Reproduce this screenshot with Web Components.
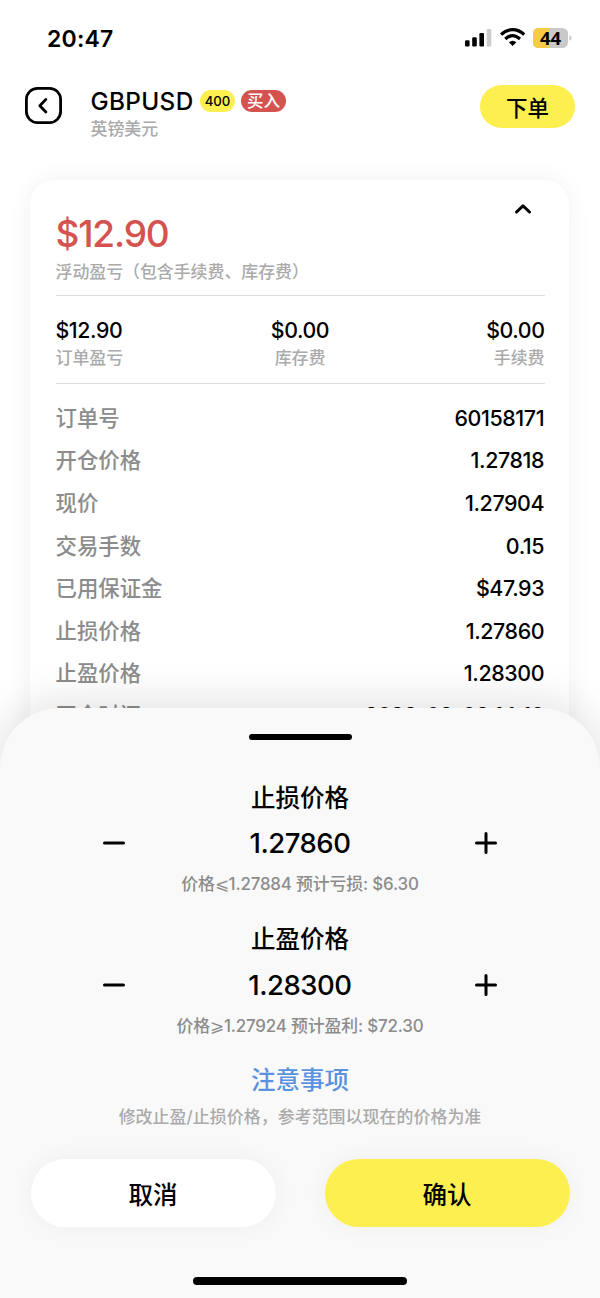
<!DOCTYPE html>
<html lang="zh-CN">
<head>
<meta charset="utf-8">
<title>GBPUSD</title>
<style>
html,body{margin:0;padding:0;background:#fff}
body{font-family:Inter,"Noto Sans CJK SC",sans-serif;font-weight:500;color:#000;width:600px;height:1298px;overflow:hidden}
</style>
</head>
<body>
<trade-app></trade-app>
<script>
function define(name, html) {
  const tpl = document.createElement('template');
  tpl.innerHTML = html;
  customElements.define(name, class extends HTMLElement {
    constructor() {
      super();
      this.attachShadow({mode: 'open'}).appendChild(tpl.content.cloneNode(true));
    }
  });
}

define('status-bar', `
<style>
:host{display:flex;box-sizing:border-box;height:76px;padding:0 29px 0 47px;align-items:center;justify-content:space-between}
.time{font-size:23px;font-weight:600;line-height:28px;letter-spacing:.2px;padding-top:1px}
svg{display:block;width:107px;height:32px;overflow:visible}
text{font:700 18.500px "Open Sans",Inter,sans-serif}
</style>
<span class="time"><slot></slot></span>
<svg viewBox="0 -5 107 32">
  <rect x="1" y="13.3" width="4.6" height="6.2" rx="1.3"/>
  <rect x="8.2" y="10.3" width="4.6" height="9.2" rx="1.3"/>
  <rect x="15.4" y="6" width="4.6" height="13.5" rx="1.3"/>
  <rect x="22.7" y="2" width="4.6" height="17.5" rx="1.3" fill="#ccc"/>
  <g fill="none" stroke="#000" stroke-width="3.2">
    <path d="M37.1 7.600C44 .9 53.2 .9 60.2 7.600"/>
    <path d="M41.3 12Q48.6 5.3 56 12"/>
  </g>
  <path d="M44.9 15.2Q48.6 12.1 52.4 15.2L48.6 19Z"/>
  <rect x="69" y="1" width="35" height="20" rx="5.500" fill="#c9c9c9"/>
  <path d="M85 1H74.500A5.500 5.500 0 0 0 69 6.500V15.500A5.500 5.500 0 0 0 74.500 21H85Z" fill="#f8cb45"/>
  <path d="M105.300 8.200Q107.600 9 107.600 11T105.300 13.800Z" fill="#c9c9c9"/>
  <text x="86.500" y="17.500" text-anchor="middle">44</text>
</svg>`);

define('tag-pill', `
<style>
:host{display:flex;box-sizing:border-box;height:22px;border-radius:11px;align-items:center;justify-content:center;line-height:22px}
</style><slot></slot>`);

define('pill-button', `
<style>
:host{display:flex;align-items:center;justify-content:center;border-radius:99px;background:#fcef4f;white-space:nowrap}
</style><slot></slot>`);

define('nav-header', `
<style>
:host{display:flex;box-sizing:border-box;height:104px;padding:9px 25px 0 25px;align-items:flex-start}
.back{width:37px;height:37px;margin:2px 0 0 -.5px;flex:none}
.names{margin:3px 0 0 29px;flex:1}
.line{display:flex;align-items:center;height:26px}
.sym{font-size:24.300px;line-height:26px;width:102px;letter-spacing:.35px;white-space:nowrap}
.lev{width:35px;margin-left:7.500px;background:#fcef4f;font-size:13.200px}
.side{width:45px;margin-left:6px;background:#d4534e;color:#fff;font-size:16.500px}
.cn{font-size:16.900px;line-height:24px;color:#aaa;margin-top:3px}
pill-button{width:95px;height:43px;font-size:21.500px}
</style>
<svg class="back" viewBox="0 0 37 37" fill="none" stroke="#000" stroke-width="2.800" stroke-linecap="round" stroke-linejoin="round">
  <rect x="1.400" y="1.400" width="34.200" height="34.200" rx="11"/>
  <path d="M20.900 12.400L14.800 18.700L20.900 25"/>
</svg>
<div class="names">
  <div class="line"><span class="sym">GBPUSD</span><tag-pill class="lev">400</tag-pill><tag-pill class="side">买入</tag-pill></div>
  <div class="cn">英镑美元</div>
</div>
<pill-button>下单</pill-button>`);

define('stat-item', `
<style>
:host{display:block;text-align:var(--align,left)}
.v{font-size:21.300px;line-height:28px;letter-spacing:-.4px}
.l{font-size:16.900px;line-height:24px;color:#aaa;margin-top:2px}
</style>
<div class="v"><slot name="value"></slot></div><div class="l"><slot></slot></div>`);

define('detail-row', `
<style>
:host{display:flex;height:42.600px;align-items:center;justify-content:space-between;font-size:21.400px;line-height:30px}
.l{color:#8c8c8c}
.v{letter-spacing:-.38px;margin-right:.3px}
:host(.last){height:40.800px}
</style>
<span class="l"><slot></slot></span><span class="v"><slot name="value"></slot></span>`);

define('order-card', `
<style>
:host{display:block;box-sizing:border-box;margin:0 31px 0 30px;height:640px;padding:34px 24.500px 0 25.500px;border-radius:25px;background:#fff;box-shadow:0 0 26px rgba(0,0,0,.06)}
.top{display:flex;justify-content:space-between;height:81px;border-bottom:1px solid #dedede}
.big{font-size:37px;line-height:40px;color:#d4534e;letter-spacing:-1.200px}
.note{font-size:16.900px;line-height:24px;margin-top:6px;color:#aaa}
svg{width:18px;height:12px;margin:-11px 13px 0 0}
.stats{display:grid;grid-template-columns:1fr 1fr 1fr;height:67px;padding-top:20px;border-bottom:1px solid #dedede}
.c{--align:center}.r{--align:right}
.rows{padding-top:12.600px}
</style>
<div class="top">
  <div><div class="big">$12.90</div><div class="note">浮动盈亏（包含手续费、库存费）</div></div>
  <svg viewBox="0 0 18 12" fill="none" stroke="#000" stroke-width="3" stroke-linecap="round" stroke-linejoin="round"><path d="M2.500 9L9 2.800L15.500 9"/></svg>
</div>
<div class="stats">
  <stat-item><span slot="value">$12.90</span>订单盈亏</stat-item>
  <stat-item class="c"><span slot="value">$0.00</span>库存费</stat-item>
  <stat-item class="r"><span slot="value">$0.00</span>手续费</stat-item>
</div>
<div class="rows">
  <detail-row>订单号<span slot="value">60158171</span></detail-row>
  <detail-row>开仓价格<span slot="value">1.27818</span></detail-row>
  <detail-row>现价<span slot="value">1.27904</span></detail-row>
  <detail-row>交易手数<span slot="value">0.15</span></detail-row>
  <detail-row>已用保证金<span slot="value">$47.93</span></detail-row>
  <detail-row>止损价格<span slot="value">1.27860</span></detail-row>
  <detail-row>止盈价格<span slot="value">1.28300</span></detail-row>
  <detail-row class="last">开仓时间<span slot="value">2023-08-03 14:10</span></detail-row>
</div>`);

define('price-stepper', `
<style>
:host{display:block;height:141.300px;text-align:center}
.t{font-size:24.500px;line-height:34px}
.mid{display:flex;align-items:center;justify-content:space-between;padding:0 103px;height:36px;margin-top:10.300px}
.v{font-size:27.500px;line-height:36px;letter-spacing:-.5px}
svg{width:22px;height:22px;display:block}
.h{font-size:16.900px;line-height:24px;margin-top:11px;color:#8c8c8c;white-space:pre;letter-spacing:-.16px}
</style>
<div class="t"><slot></slot></div>
<div class="mid">
  <svg viewBox="0 0 22 22" stroke="#000" stroke-width="3" stroke-linecap="round"><path d="M1.500 11H20.500"/></svg>
  <span class="v"><slot name="value"></slot></span>
  <svg viewBox="0 0 22 22" stroke="#000" stroke-width="3" stroke-linecap="round"><path d="M1.500 11H20.500M11 1.500V20.500"/></svg>
</div>
<div class="h"><slot name="hint"></slot></div>`);

define('bottom-sheet', `
<style>
:host{display:flex;flex-direction:column;align-items:stretch;box-sizing:border-box;position:absolute;left:0;right:0;bottom:0;height:590px;border-radius:60px 60px 0 0;background:#f9f9f9;box-shadow:0 0 50px rgba(0,0,0,.15)}
.grip{width:103px;height:6px;border-radius:3px;background:#000;margin:26px auto 41px;flex:none}
.link{font-size:24.500px;line-height:34px;color:#5a92e0;text-align:center;margin-top:-.5px}
.tip{font-size:16.900px;line-height:24px;color:#aaa;text-align:center;margin-top:7.900px;letter-spacing:.08px}
.btns{display:flex;gap:49px;padding:0 30.500px;margin-top:30.500px}
.btns pill-button{flex:1;height:67.500px;font-size:24.500px;box-shadow:0 0 25px rgba(0,0,0,.045)}
.btns .cancel{background:#fff}
.home{width:214px;height:7.500px;border-radius:4px;background:#000;margin:50.500px auto 0;flex:none}
</style>
<div class="grip"></div>
<price-stepper>止损价格<span slot="value">1.27860</span><span slot="hint">价格⩽1.27884 预计亏损: $6.30</span></price-stepper>
<price-stepper>止盈价格<span slot="value">1.28300</span><span slot="hint">价格⩾1.27924 预计盈利: $72.30</span></price-stepper>
<div class="link">注意事项</div>
<div class="tip">修改止盈/止损价格，参考范围以现在的价格为准</div>
<div class="btns"><pill-button class="cancel">取消</pill-button><pill-button>确认</pill-button></div>
<div class="home"></div>`);

define('trade-app', `
<style>:host{display:block;position:relative;width:600px;height:1298px;overflow:hidden;background:#fff}</style>
<status-bar>20:47</status-bar>
<nav-header></nav-header>
<order-card></order-card>
<bottom-sheet></bottom-sheet>`);
</script>
</body>
</html>
